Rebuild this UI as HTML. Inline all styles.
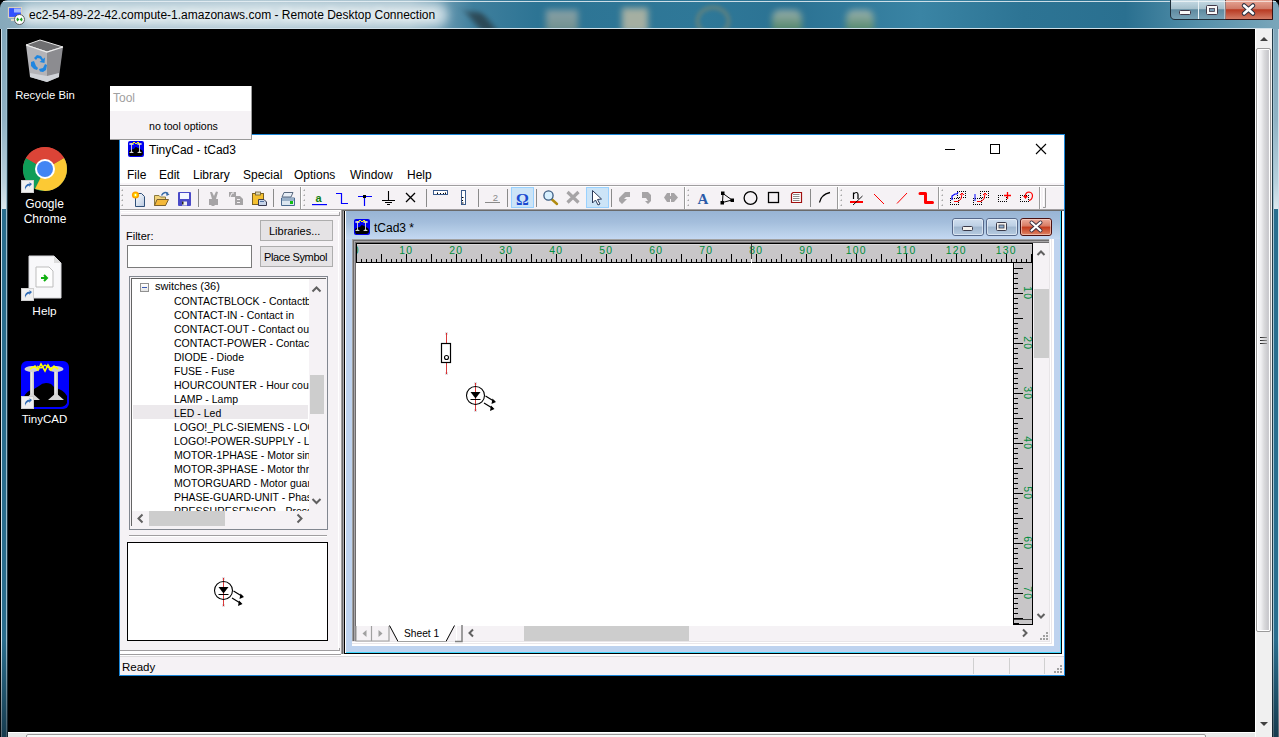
<!DOCTYPE html>
<html><head><meta charset="utf-8">
<style>
*{margin:0;padding:0;box-sizing:border-box}
html,body{width:1279px;height:737px;overflow:hidden;background:#000;font-family:"Liberation Sans",sans-serif;position:relative}
.a{position:absolute}
.t{position:absolute;white-space:nowrap;line-height:1}
</style></head><body>
<!-- OUTER RDP FRAME -->
<div class="a" style="left:0;top:0;width:1279px;height:29px;overflow:hidden;border-radius:8px 8px 0 0;background:linear-gradient(90deg,#86a9bb 0,#9dbac8 8%,#a6c0cd 20%,#98b6c5 32%,#3f7f9d 37%,#2d7494 42%,#2f7898 55%,#2b7293 62%,#3a84a4 72%,#2d7494 80%,#2a7090 88%,#5691ab 94%,#7aa6ba 100%)">
 <div class="a" style="left:18px;top:3px;width:430px;height:24px;background:#e4eef2;opacity:.75;filter:blur(5px);border-radius:12px"></div>
 <div class="a" style="left:474px;top:12px;width:16px;height:20px;background:#202020;opacity:.55;filter:blur(3px);transform:skewX(40deg)"></div>
 <div class="a" style="left:546px;top:10px;width:32px;height:22px;background:linear-gradient(#b0b4b0,#8a9a88);opacity:.7;filter:blur(3px)"></div>
 <div class="a" style="left:622px;top:8px;width:26px;height:24px;background:#d8c8a8;opacity:.7;filter:blur(3px)"></div>
 <div class="a" style="left:696px;top:6px;width:34px;height:30px;border:3px solid #a09060;border-radius:50%;opacity:.55;filter:blur(2px)"></div>
 <div class="a" style="left:772px;top:10px;width:30px;height:22px;background:linear-gradient(#c8c8b8,#5a8a50);opacity:.7;filter:blur(3px);border-radius:8px 8px 0 0"></div>
 <div class="a" style="left:846px;top:10px;width:28px;height:22px;background:linear-gradient(#c8c8b8,#5a8a50);opacity:.7;filter:blur(3px);border-radius:8px 8px 0 0"></div>
</div>
<div class="a" style="left:3px;top:1px;width:1273px;height:1px;background:#e8f0f4;opacity:.85"></div>
<div class="a" style="left:7px;top:28px;width:1265px;height:1px;background:#cfdfe8"></div>
<div class="a" style="left:0;top:29px;width:8px;height:708px;background:linear-gradient(90deg,#000 0,#000 1px,#cfe0ea 1px,#cfe0ea 2px,#2a6e8e 2px,#2a6e8e 6px,#9dbccb 6px,#9dbccb 7px,#1d3542 7px)"></div>
<div class="a" style="left:1272px;top:29px;width:7px;height:708px;background:linear-gradient(90deg,#203a48 0,#203a48 1px,#9fc0d0 1px,#9fc0d0 2px,#2a6e8e 2px,#2a6e8e 6px,#d0e0ea 6px)"></div>
<div class="a" style="left:0;top:640px;width:8px;height:97px;background:linear-gradient(rgba(10,25,35,0),rgba(10,25,35,.6))"></div>
<div class="a" style="left:1272px;top:640px;width:7px;height:97px;background:linear-gradient(rgba(10,25,35,0),rgba(10,25,35,.6))"></div>
<div class="a" style="left:2px;top:29px;width:4px;height:180px;background:linear-gradient(#7fa6ba,#90b2c4 50%,#b8d0dc 85%,#dce8ee)"></div>
<div class="a" style="left:1274px;top:29px;width:4px;height:180px;background:linear-gradient(#7fa6ba,#90b2c4 50%,#b8d0dc 85%,#dce8ee)"></div>
<!-- title text -->
<div class="t" style="left:29px;top:9px;font-size:12px;color:#000;text-shadow:0 0 6px #fff,0 0 10px #fff">ec2-54-89-22-42.compute-1.amazonaws.com - Remote Desktop Connection</div>
<!-- right scrollbar -->
<div class="a" style="left:1255px;top:29px;width:17px;height:708px;background:#f0f0f0;border-left:1px solid #fff"></div>
<div class="a" style="left:1256px;top:48px;width:15px;height:584px;background:linear-gradient(90deg,#fbfbfb,#f0f0f2 30%,#dadadc 55%,#c8c8cc 85%,#d4d4d6);border:1px solid #9a9a9a;border-radius:2px;box-shadow:inset 0 0 0 1px #fff"></div>
<svg class="a" style="left:1255px;top:29px" width="17" height="708"><path d="M5,12 L9,8 L13,12 Z" fill="#404040"/><path d="M5,693 L9,697 L13,693 Z" fill="#404040"/></svg>
<!-- bottom scrollbar -->
<div class="a" style="left:8px;top:732px;width:1247px;height:5px;background:#e8e8e8;border-top:1px solid #fff"></div>
<div class="a" style="left:26px;top:734px;width:1180px;height:6px;background:#fafafa;border:1px solid #9a9a9a;border-radius:2px"></div>
<!-- DESKTOP ICONS -->
<svg class="a" style="left:0;top:0" width="80" height="440" viewBox="0 0 80 440">
 <!-- recycle bin -->
 <polygon points="26,45 40,40 63,47 47,52" fill="#6e6e70" stroke="#e8e8e8" stroke-width="1"/>
 <polygon points="26,45 47,52 47,82 30,77" fill="#b4b4b8"/>
 <polygon points="47,52 63,47 59,77 47,82" fill="#8c8c90"/>
 <polygon points="30,73 47,76 59,73 59,77 47,82 30,77" fill="#d0d3d8"/>
 <polyline points="26,45 47,52 63,47" fill="none" stroke="#eee" stroke-width="1.2"/>
 <g fill="#1f86e0">
  <path d="M34,58 L37,55 L41,56 L43,59 L45,57.5 L44.5,63 L39.5,62 L41.5,60.5 L40,58.5 L37.5,58 L36,60 Z"/>
  <path d="M31,62 L34,61 L36,66 L38,68 L37,70 L34,69 L31,66 Z"/>
  <path d="M39,69 L43,68 L45,64 L47,65 L46,70 L43,72 L40,71.5 Z"/>
 </g>
 <!-- chrome -->
 <circle cx="45" cy="169" r="22" fill="#db4437"/>
 <path d="M45,169 L26,158 A22,22 0 0 0 35,189 Z" fill="#0f9d58"/>
 <path d="M45,169 L35,189 A22,22 0 0 0 45,191 A22,22 0 0 0 67,169 A22,22 0 0 0 64,158 Z" fill="#0f9d58"/>
 <path d="M45,169 L64,158 A22,22 0 0 1 45,191 L35,189 Z" fill="#fcc934"/>
 <path d="M45,169 L26,158 A22,22 0 0 1 64,158 Z" fill="#db4437"/>
 <circle cx="45" cy="169" r="10" fill="#fff"/>
 <circle cx="45" cy="169" r="8" fill="#4285f4"/>
 <!-- help page -->
 <path d="M29,256 L54,256 L61,263 L61,298 L29,298 Z" fill="#f8f8fa" stroke="#d8d8dc" stroke-width="1"/>
 <path d="M54,256 L54,263 L61,263 Z" fill="#dcdcdc"/>
 <path d="M36,267 L49,267 L53,271 L53,287 L36,287 Z" fill="#fefefe" stroke="#bdbdbd" stroke-width="1"/>
 <path d="M41,278 h6 M44,275 l3,3 -3,3" fill="none" stroke="#10b010" stroke-width="2"/>
 <!-- tinycad -->
 <rect x="21" y="361" width="48" height="48" rx="6" fill="#0000ff"/>
 <path d="M23,398 Q27,390 34,389 L39,386 Q44,381 51,384 L55,388 Q63,389 67,396 L67,403 Q65,407 60,407 L28,407 Q23,406 23,402 Z" fill="#000"/>
 <rect x="30" y="371" width="4" height="25" fill="#c8c8c8"/><rect x="31" y="371" width="1.5" height="25" fill="#e8e8e8"/>
 <rect x="54" y="371" width="4" height="25" fill="#c8c8c8"/><rect x="55" y="371" width="1.5" height="25" fill="#e8e8e8"/>
 <path d="M24,400 L32,393 L40,400 Z M48,400 L56,393 L64,400 Z" fill="#d8d8d8"/>
 <ellipse cx="32" cy="369" rx="7.5" ry="3" fill="#d0d0d0"/><ellipse cx="56" cy="369" rx="7.5" ry="3" fill="#d0d0d0"/>
 <path d="M30,369 L35,366 L38,370 L41,364 L45,371 L48,365 L51,370 L54,366 L58,369" fill="none" stroke="#ffff00" stroke-width="1.6"/>
 <path d="M37,366 L41,368 L45,365 L49,368" fill="none" stroke="#ffff00" stroke-width="1.2"/>
 <!-- shortcut overlays -->
 <g>
  <rect x="21.5" y="180.5" width="12" height="12" fill="#f0f0f0" stroke="#d0d0d0"/>
  <path d="M25,190 Q24,184 30,183.5 L29,182 L32,184 L29,187 L29.5,185.5 Q26,186 25,190Z" fill="#2f6bb5"/>
  <rect x="21.5" y="288.5" width="12" height="12" fill="#f0f0f0" stroke="#d0d0d0"/>
  <path d="M25,298 Q24,292 30,291.5 L29,290 L32,292 L29,295 L29.5,293.5 Q26,294 25,298Z" fill="#2f6bb5"/>
  <rect x="21.5" y="396.5" width="12" height="12" fill="#f0f0f0" stroke="#d0d0d0"/>
  <path d="M25,406 Q24,400 30,399.5 L29,398 L32,400 L29,403 L29.5,401.5 Q26,402 25,406Z" fill="#2f6bb5"/>
 </g>
</svg>
<div class="t" style="left:0;width:90px;text-align:center;top:90px;font-size:11.3px;color:#fff">Recycle Bin</div>
<div class="t" style="left:0;width:89px;text-align:center;top:198px;font-size:12px;color:#fff">Google</div>
<div class="t" style="left:0;width:90px;text-align:center;top:213px;font-size:12px;color:#fff">Chrome</div>
<div class="t" style="left:0;width:89px;text-align:center;top:306px;font-size:11.8px;color:#fff">Help</div>
<div class="t" style="left:0;width:89px;text-align:center;top:414px;font-size:11.5px;color:#fff">TinyCAD</div>

<!-- TINYCAD WINDOW -->
<div class="a" style="left:119px;top:134px;width:946px;height:542px;background:#f5f2f5;border:1px solid #1a86d8"></div>
<div class="a" style="left:120px;top:135px;width:944px;height:50px;background:#fff"></div>
<div class="a" style="left:120px;top:183px;width:944px;height:2px;background:#f8f5f8"></div>
<div class="a" style="left:120px;top:185px;width:944px;height:1px;background:#a09ea0"></div>
<div class="a" style="left:120px;top:186px;width:944px;height:1px;background:#fff"></div>
<div class="a" style="left:120px;top:209px;width:944px;height:1px;background:#a09ea0"></div>
<div class="a" style="left:120px;top:210px;width:944px;height:1px;background:#fff"></div>
<div class="t" style="left:149px;top:144px;font-size:12px;color:#000">TinyCad - tCad3</div>
<svg class="a" style="left:930px;top:134px" width="134" height="30">
 <path d="M15,15.5 H25" stroke="#000" stroke-width="1"/>
 <rect x="60.5" y="10.5" width="9" height="9" fill="none" stroke="#000" stroke-width="1"/>
 <path d="M106,10 L116,20 M116,10 L106,20" stroke="#000" stroke-width="1.1"/>
</svg>
<div class="t" style="left:127px;top:169px;font-size:12px;color:#000;word-spacing:0">File</div>
<div class="t" style="left:159px;top:169px;font-size:12px;color:#000">Edit</div>
<div class="t" style="left:193px;top:169px;font-size:12px;color:#000">Library</div>
<div class="t" style="left:243px;top:169px;font-size:12px;color:#000">Special</div>
<div class="t" style="left:294px;top:169px;font-size:12px;color:#000">Options</div>
<div class="t" style="left:350px;top:169px;font-size:12px;color:#000">Window</div>
<div class="t" style="left:407px;top:169px;font-size:12px;color:#000">Help</div>
<!-- status bar -->
<div class="a" style="left:120px;top:650px;width:220px;height:1px;background:#a09ea0"></div>
<div class="a" style="left:120px;top:651px;width:220px;height:3px;background:#fff"></div>
<div class="a" style="left:120px;top:654px;width:222px;height:1px;background:#a09ea0"></div>
<div class="a" style="left:120px;top:655px;width:944px;height:1px;background:#fff"></div>
<div class="t" style="left:122px;top:662px;font-size:11.5px;color:#000">Ready</div>

<!-- LEFT PANEL -->
<div class="a" style="left:121px;top:212px;width:218px;height:1px;background:#fff"></div>
<div class="a" style="left:121px;top:215px;width:218px;height:1px;background:#a09ea0"></div>
<div class="a" style="left:339px;top:212px;width:1px;height:4px;background:#a09ea0"></div>
<div class="a" style="left:338px;top:220px;width:1px;height:430px;background:#fff"></div>
<div class="a" style="left:339px;top:648px;width:1px;height:3px;background:#a09ea0"></div>
<div class="t" style="left:126px;top:231px;font-size:11px;color:#000">Filter:</div>
<div class="a" style="left:127px;top:245px;width:125px;height:23px;background:#fff;border:1px solid #7a7a7a"></div>
<div class="a" style="left:260px;top:220px;width:73px;height:21px;background:#e5e3e5;border:1px solid #adadad"></div>
<div class="t" style="left:269px;top:226px;font-size:11px;color:#000">Libraries...</div>
<div class="a" style="left:260px;top:246px;width:73px;height:21px;background:#e5e3e5;border:1px solid #adadad"></div>
<div class="t" style="left:264px;top:252px;font-size:11px;color:#000;letter-spacing:-0.35px">Place Symbol</div>
<!-- tree -->
<div class="a" style="left:129px;top:276px;width:199px;height:254px;background:#f5f2f5;border:1px solid #828790"></div>
<div class="a" style="left:131px;top:278px;width:1px;height:248px;background:#646464"></div>
<div class="a" style="left:131px;top:278px;width:195px;height:1px;background:#646464"></div>
<div class="a" style="left:132px;top:279px;width:177px;height:232px;background:#fff;overflow:hidden">
 <div class="a" style="left:1px;top:126px;width:175px;height:14px;background:#ece9ec"></div>
 <div class="a" style="left:8px;top:4px;width:9px;height:9px;border:1px solid #919191;background:linear-gradient(#fff,#e4e4e4)"></div>
 <div class="a" style="left:10px;top:8px;width:5px;height:1px;background:#3b5bb5"></div>
 <div id="tree" style="position:absolute;left:0;top:1px;font-size:10.5px;color:#000;line-height:14px">
  <div class="t" style="left:23px;top:1px;font-size:11px">switches (36)</div>
  <div class="t" style="left:42px;top:16px">CONTACTBLOCK - Contactblock</div>
  <div class="t" style="left:42px;top:30px">CONTACT-IN - Contact in</div>
  <div class="t" style="left:42px;top:44px">CONTACT-OUT - Contact out</div>
  <div class="t" style="left:42px;top:58px">CONTACT-POWER - Contact power</div>
  <div class="t" style="left:42px;top:72px">DIODE - Diode</div>
  <div class="t" style="left:42px;top:86px">FUSE - Fuse</div>
  <div class="t" style="left:42px;top:100px">HOURCOUNTER - Hour counter</div>
  <div class="t" style="left:42px;top:114px">LAMP - Lamp</div>
  <div class="t" style="left:42px;top:128px">LED - Led</div>
  <div class="t" style="left:42px;top:142px">LOGO!_PLC-SIEMENS - LOGO</div>
  <div class="t" style="left:42px;top:156px">LOGO!-POWER-SUPPLY - LOGO</div>
  <div class="t" style="left:42px;top:170px">MOTOR-1PHASE - Motor single</div>
  <div class="t" style="left:42px;top:184px">MOTOR-3PHASE - Motor three</div>
  <div class="t" style="left:42px;top:198px">MOTORGUARD - Motor guard</div>
  <div class="t" style="left:42px;top:212px">PHASE-GUARD-UNIT - Phase</div>
  <div class="t" style="left:42px;top:226px">PRESSURESENSOR - Pressure</div>
 </div>
</div>
<div class="a" style="left:310px;top:375px;width:14px;height:39px;background:#cdcdcd"></div>
<div class="a" style="left:149px;top:511px;width:76px;height:15px;background:#cdcdcd"></div>
<svg class="a" style="left:129px;top:276px" width="200" height="255">
 <path d="M183.5,15.5 L187.5,11.5 L191.5,15.5" fill="none" stroke="#606060" stroke-width="2"/>
 <path d="M183.5,223 L187.5,227 L191.5,223" fill="none" stroke="#606060" stroke-width="2"/>
 <path d="M13.5,238.5 L9.5,242.5 L13.5,246.5" fill="none" stroke="#606060" stroke-width="2"/>
 <path d="M168.5,238.5 L172.5,242.5 L168.5,246.5" fill="none" stroke="#606060" stroke-width="2"/>
</svg>
<div class="a" style="left:129px;top:535px;width:198px;height:1px;background:#a09ea0"></div>
<div class="a" style="left:129px;top:536px;width:198px;height:1px;background:#fff"></div>
<!-- preview -->
<div class="a" style="left:127px;top:542px;width:201px;height:99px;background:#fff;border:1px solid #000"></div>
<!-- TOOL POPUP -->
<div class="a" style="left:110px;top:86px;width:142px;height:54px;background:#f5f2f5;border-right:1px solid #9a9a9a;border-bottom:1px solid #9a9a9a"></div>
<div class="a" style="left:110px;top:86px;width:141px;height:25px;background:#fff"></div>
<div class="t" style="left:113px;top:92px;font-size:12px;color:#a0a0a0">Tool</div>
<div class="t" style="left:149px;top:121px;font-size:10.6px;color:#000">no tool options</div>

<!-- MDI CLIENT + CHILD -->
<div class="a" style="left:341px;top:210px;width:723px;height:1px;background:#6a6a6a"></div>
<div class="a" style="left:341px;top:210px;width:1px;height:444px;background:#a0a0a0"></div>
<div class="a" style="left:342px;top:211px;width:1px;height:443px;background:#6d6b6d"></div>
<div class="a" style="left:343px;top:211px;width:1px;height:443px;background:#a8a6a8"></div>
<div class="a" style="left:344px;top:211px;width:718px;height:443px;background:#000"></div>
<div class="a" style="left:345px;top:211px;width:1px;height:442px;background:#fff"></div>
<div class="a" style="left:346px;top:211px;width:715px;height:442px;background:#40d8ff"></div>
<div class="a" style="left:346px;top:211px;width:714px;height:441px;background:#bed3ef"></div>
<div class="a" style="left:1062px;top:211px;width:2px;height:444px;background:#fff"></div>
<div class="a" style="left:346px;top:211px;width:714px;height:28px;background:linear-gradient(#98b4d4,#a4bedc 40%,#b4cce6 70%,#c4d8f2)"></div>
<!-- child client sunken edge -->
<div class="a" style="left:352px;top:239px;width:702px;height:407px;background:#fff"></div>
<div class="a" style="left:352px;top:239px;width:700px;height:405px;background:#eae7ea"></div>
<div class="a" style="left:352px;top:239px;width:699px;height:404px;background:#fff"></div>
<div class="a" style="left:352px;top:239px;width:698px;height:403px;background:#e8e5e8"></div>
<div class="a" style="left:352px;top:239px;width:697px;height:402px;background:#a0a0a0"></div>
<div class="a" style="left:353px;top:240px;width:696px;height:401px;background:#6d6b6d"></div>
<div class="a" style="left:354px;top:241px;width:695px;height:400px;background:#a8a6a8"></div>
<div class="a" style="left:355px;top:242px;width:694px;height:399px;background:#6d6b6d"></div>
<div class="a" style="left:356px;top:243px;width:693px;height:398px;background:#f5f2f5"></div>
<!-- canvas -->
<div class="a" style="left:356px;top:263px;width:657px;height:363px;background:#fff"></div>
<svg class="a" style="left:0;top:0" width="1279" height="737" viewBox="0 0 1279 737" shape-rendering="crispEdges">
<defs><clipPath id="hr"><rect x="357" y="244" width="675" height="18"/></clipPath><clipPath id="vr"><rect x="1014" y="263" width="18" height="361"/></clipPath></defs>
<rect x="356" y="243" width="677" height="20" fill="#000"/>
<rect x="357" y="244" width="675" height="18" fill="#c8c6c8"/>
<rect x="357" y="244" width="675" height="1" fill="#dcdadc"/>
<path d="M361.5,259V262 M366.5,259V262 M371.5,259V262 M376.5,259V262 M381.5,254V262 M386.5,259V262 M391.5,259V262 M396.5,259V262 M401.5,259V262 M406.5,254V262 M411.5,259V262 M416.5,259V262 M421.5,259V262 M426.5,259V262 M431.5,254V262 M436.5,259V262 M441.5,259V262 M446.5,259V262 M451.5,259V262 M456.5,254V262 M461.5,259V262 M466.5,259V262 M471.5,259V262 M476.5,259V262 M481.5,254V262 M486.5,259V262 M491.5,259V262 M496.5,259V262 M501.5,259V262 M506.5,254V262 M511.5,259V262 M516.5,259V262 M521.5,259V262 M526.5,259V262 M531.5,254V262 M536.5,259V262 M541.5,259V262 M546.5,259V262 M551.5,259V262 M556.5,254V262 M561.5,259V262 M566.5,259V262 M571.5,259V262 M576.5,259V262 M581.5,254V262 M586.5,259V262 M591.5,259V262 M596.5,259V262 M601.5,259V262 M606.5,254V262 M611.5,259V262 M616.5,259V262 M621.5,259V262 M626.5,259V262 M631.5,254V262 M636.5,259V262 M641.5,259V262 M646.5,259V262 M651.5,259V262 M656.5,254V262 M661.5,259V262 M666.5,259V262 M671.5,259V262 M676.5,259V262 M681.5,254V262 M686.5,259V262 M691.5,259V262 M696.5,259V262 M701.5,259V262 M706.5,254V262 M711.5,259V262 M716.5,259V262 M721.5,259V262 M726.5,259V262 M731.5,254V262 M736.5,259V262 M741.5,259V262 M746.5,259V262 M751.5,259V262 M756.5,254V262 M761.5,259V262 M766.5,259V262 M771.5,259V262 M776.5,259V262 M781.5,254V262 M786.5,259V262 M791.5,259V262 M796.5,259V262 M801.5,259V262 M806.5,254V262 M811.5,259V262 M816.5,259V262 M821.5,259V262 M826.5,259V262 M831.5,254V262 M836.5,259V262 M841.5,259V262 M846.5,259V262 M851.5,259V262 M856.5,254V262 M861.5,259V262 M866.5,259V262 M871.5,259V262 M876.5,259V262 M881.5,254V262 M886.5,259V262 M891.5,259V262 M896.5,259V262 M901.5,259V262 M906.5,254V262 M911.5,259V262 M916.5,259V262 M921.5,259V262 M926.5,259V262 M931.5,254V262 M936.5,259V262 M941.5,259V262 M946.5,259V262 M951.5,259V262 M956.5,254V262 M961.5,259V262 M966.5,259V262 M971.5,259V262 M976.5,259V262 M981.5,254V262 M986.5,259V262 M991.5,259V262 M996.5,259V262 M1001.5,259V262 M1006.5,254V262 M1011.5,259V262 M1016.5,259V262 M1021.5,259V262 M1026.5,259V262 M1031.5,254V262" stroke="#000" stroke-width="1" fill="none"/>
<g clip-path="url(#hr)" font-family="Liberation Sans" font-size="10.4" letter-spacing="1.2" fill="#008c3c" text-anchor="middle" shape-rendering="auto"><text x="356.3" y="254">0</text><text x="406.3" y="254">10</text><text x="456.3" y="254">20</text><text x="506.3" y="254">30</text><text x="556.3" y="254">40</text><text x="606.3" y="254">50</text><text x="656.3" y="254">60</text><text x="706.3" y="254">70</text><text x="756.3" y="254">80</text><text x="806.3" y="254">90</text><text x="856.3" y="254">100</text><text x="906.3" y="254">110</text><text x="956.3" y="254">120</text><text x="1006.3" y="254">130</text></g>
<rect x="1013" y="262" width="20" height="363" fill="#000"/>
<rect x="1014" y="263" width="18" height="361" fill="#c8c6c8"/>
<rect x="1014" y="263" width="1" height="355" fill="#dcdadc"/>
<path d="M1014,268.5H1023 M1014,273.5H1018 M1014,278.5H1018 M1014,283.5H1018 M1014,288.5H1018 M1014,293.5H1023 M1014,298.5H1018 M1014,303.5H1018 M1014,308.5H1018 M1014,313.5H1018 M1014,318.5H1023 M1014,323.5H1018 M1014,328.5H1018 M1014,333.5H1018 M1014,338.5H1018 M1014,343.5H1023 M1014,348.5H1018 M1014,353.5H1018 M1014,358.5H1018 M1014,363.5H1018 M1014,368.5H1023 M1014,373.5H1018 M1014,378.5H1018 M1014,383.5H1018 M1014,388.5H1018 M1014,393.5H1023 M1014,398.5H1018 M1014,403.5H1018 M1014,408.5H1018 M1014,413.5H1018 M1014,418.5H1023 M1014,423.5H1018 M1014,428.5H1018 M1014,433.5H1018 M1014,438.5H1018 M1014,443.5H1023 M1014,448.5H1018 M1014,453.5H1018 M1014,458.5H1018 M1014,463.5H1018 M1014,468.5H1023 M1014,473.5H1018 M1014,478.5H1018 M1014,483.5H1018 M1014,488.5H1018 M1014,493.5H1023 M1014,498.5H1018 M1014,503.5H1018 M1014,508.5H1018 M1014,513.5H1018 M1014,518.5H1023 M1014,523.5H1018 M1014,528.5H1018 M1014,533.5H1018 M1014,538.5H1018 M1014,543.5H1023 M1014,548.5H1018 M1014,553.5H1018 M1014,558.5H1018 M1014,563.5H1018 M1014,568.5H1023 M1014,573.5H1018 M1014,578.5H1018 M1014,583.5H1018 M1014,588.5H1018 M1014,593.5H1023 M1014,598.5H1018 M1014,603.5H1018 M1014,608.5H1018 M1014,613.5H1018 M1014,618.5H1023" stroke="#000" stroke-width="1" fill="none"/>
<rect x="1014" y="619" width="18" height="1" fill="#404040"/>
<rect x="1014" y="623" width="5" height="1" fill="#000"/>
<g clip-path="url(#vr)" font-family="Liberation Sans" font-size="10.4" letter-spacing="1.2" fill="#008c3c" text-anchor="middle" shape-rendering="auto"><text transform="translate(1023.5,293.3) rotate(90)" x="0" y="0">10</text><text transform="translate(1023.5,343.3) rotate(90)" x="0" y="0">20</text><text transform="translate(1023.5,393.3) rotate(90)" x="0" y="0">30</text><text transform="translate(1023.5,443.3) rotate(90)" x="0" y="0">40</text><text transform="translate(1023.5,493.3) rotate(90)" x="0" y="0">50</text><text transform="translate(1023.5,543.3) rotate(90)" x="0" y="0">60</text><text transform="translate(1023.5,593.3) rotate(90)" x="0" y="0">70</text></g>
</svg>
<!-- child caption -->
<div class="t" style="left:374px;top:222px;font-size:12px;color:#000">tCad3 *</div>

<!-- child scrollbars -->
<div class="a" style="left:1034px;top:289px;width:15px;height:69px;background:#cdcdcd"></div>
<div class="a" style="left:524px;top:626px;width:165px;height:15px;background:#cdcdcd"></div>
<svg class="a" style="left:340px;top:240px" width="720" height="410">
 <path d="M697.5,15 L701,11.5 L704.5,15" fill="none" stroke="#606060" stroke-width="2"/>
 <path d="M697.5,374 L701,377.5 L704.5,374" fill="none" stroke="#606060" stroke-width="2"/>
 <path d="M133,389.5 L129.5,393 L133,396.5" fill="none" stroke="#606060" stroke-width="2"/>
 <path d="M683,389.5 L686.5,393 L683,396.5" fill="none" stroke="#606060" stroke-width="2"/>
 <g fill="#a0a0a0"><rect x="706" y="392" width="2" height="2"/><rect x="703" y="395" width="2" height="2"/><rect x="706" y="395" width="2" height="2"/><rect x="700" y="398" width="2" height="2"/><rect x="703" y="398" width="2" height="2"/><rect x="706" y="398" width="2" height="2"/></g>
 <!-- sheet tabs -->
 <path d="M16,386 V401 H49 V386" fill="none" stroke="#a0a0a0" stroke-width="1.2"/>
 <path d="M31.5,386 V401" stroke="#a0a0a0" stroke-width="1.2"/>
 <path d="M26.5,390 L22.5,393.5 L26.5,397 Z" fill="#a0a0a0"/>
 <path d="M38.5,390 L42.5,393.5 L38.5,397 Z" fill="#a0a0a0"/>
 <path d="M49.5,385.5 L58,401.5 H106 L114.5,385.5 Z" fill="#fff" stroke="none"/>
 <path d="M49.5,385.5 L58,401.5 H106 L114.5,385.5" fill="none" stroke="#000" stroke-width="1"/>
 <path d="M58,401.5 H106" stroke="#a0a0a0" stroke-width="1"/>
 <path d="M116.5,386 V401" stroke="#fff" stroke-width="1"/>
 <path d="M122,385 V401.5 H115" fill="none" stroke="#808080" stroke-width="1.5"/>
</svg>
<div class="t" style="left:404px;top:629px;font-size:10.2px;color:#000">Sheet 1</div>
<!-- status bar seps -->
<div class="a" style="left:973px;top:658px;width:1px;height:16px;background:#d0d0d0"></div>
<div class="a" style="left:1009px;top:658px;width:1px;height:16px;background:#d0d0d0"></div>
<div class="a" style="left:1044px;top:658px;width:1px;height:16px;background:#d0d0d0"></div>
<svg class="a" style="left:1052px;top:663px" width="14" height="14"><g fill="#a0a0a0"><rect x="8" y="2" width="2" height="2"/><rect x="5" y="5" width="2" height="2"/><rect x="8" y="5" width="2" height="2"/><rect x="2" y="8" width="2" height="2"/><rect x="5" y="8" width="2" height="2"/><rect x="8" y="8" width="2" height="2"/></g></svg>

<!-- SCHEMATIC -->
<svg class="a" style="left:0;top:0" width="1279" height="737" viewBox="0 0 1279 737">
 <rect x="445" y="332" width="3" height="3" fill="#e4e0e4"/><rect x="445" y="372" width="3" height="3" fill="#e4e0e4"/>
 <path d="M446.5,333 V343 M446.5,363 V373.5" stroke="#d83a3a" stroke-width="1"/>
 <rect x="446" y="333" width="1" height="1" fill="#e02020"/><rect x="446" y="373" width="1" height="1" fill="#e02020"/>
 <rect x="441.5" y="343.5" width="9" height="19" fill="none" stroke="#000" stroke-width="1.2"/>
 <circle cx="446.5" cy="357.5" r="2" fill="none" stroke="#000" stroke-width="1.1"/>
 <g transform="translate(475.5,395.5)">
 <rect x="-1.5" y="-13.5" width="3" height="3" fill="#e4e0e4"/><rect x="-1.5" y="13.5" width="3" height="3" fill="#e4e0e4"/>
 <path d="M0,-12 V15" stroke="#d83a3a" stroke-width="1"/>
 <circle cx="0" cy="0" r="9" fill="none" stroke="#000" stroke-width="1.1"/>
 <path d="M-5,-3.5 H5 L0,3 Z" fill="#000"/>
 <path d="M-5,4 H5" stroke="#000" stroke-width="1"/>
 <rect x="-0.5" y="-12.5" width="1" height="1" fill="#e02020"/><rect x="-0.5" y="14.5" width="1" height="1" fill="#e02020"/>
 <path d="M10,0.5 L19,6 M8.5,7.5 L17.5,13" stroke="#000" stroke-width="1.2"/>
 <path d="M20.5,6.5 L16,8.5 L17,3 Z M19,13.5 L14.5,15.5 L15.5,10 Z" fill="#000"/>
</g>
 <g transform="translate(223.5,590.5)">
 <rect x="-1.5" y="-13.5" width="3" height="3" fill="#e4e0e4"/><rect x="-1.5" y="13.5" width="3" height="3" fill="#e4e0e4"/>
 <path d="M0,-12 V15" stroke="#d83a3a" stroke-width="1"/>
 <circle cx="0" cy="0" r="9" fill="none" stroke="#000" stroke-width="1.1"/>
 <path d="M-5,-3.5 H5 L0,3 Z" fill="#000"/>
 <path d="M-5,4 H5" stroke="#000" stroke-width="1"/>
 <rect x="-0.5" y="-12.5" width="1" height="1" fill="#e02020"/><rect x="-0.5" y="14.5" width="1" height="1" fill="#e02020"/>
 <path d="M10,0.5 L19,6 M8.5,7.5 L17.5,13" stroke="#000" stroke-width="1.2"/>
 <path d="M20.5,6.5 L16,8.5 L17,3 Z M19,13.5 L14.5,15.5 L15.5,10 Z" fill="#000"/>
</g>
</svg>
<!-- WINDOW ICONS -->
<svg class="a" style="left:128px;top:141px" width="16" height="16" viewBox="0 0 16 16">
 <rect x="0" y="0" width="16" height="16" rx="2" fill="#0000f0"/>
 <path d="M1,10 Q3,8 6,8 Q7,6 8,6 Q10,7 12,8 Q15,9 15,12 Q15,15 12,15 H2 Q1,14 1,12 Z" fill="#000"/>
 <rect x="3" y="3" width="1" height="9" fill="#c8c8c8"/><rect x="11" y="3" width="1" height="9" fill="#c8c8c8"/>
 <path d="M1,12 L3.5,10 L6,12 Z M9,12 L11.5,10 L14,12 Z" fill="#d8d8d8"/>
 <ellipse cx="3.5" cy="3" rx="2.5" ry="1" fill="#d8d8d8"/><ellipse cx="11.5" cy="3" rx="2.5" ry="1" fill="#d8d8d8"/>
 <path d="M4,3 L6,1 L8,3 L10,1 L12,3" fill="none" stroke="#ffff00" stroke-width="1"/>
</svg>
<svg class="a" style="left:354px;top:219px" width="16" height="16" viewBox="0 0 16 16">
 <rect x="0" y="0" width="16" height="16" rx="2" fill="#0000f0"/>
 <path d="M1,10 Q3,8 6,8 Q7,6 8,6 Q10,7 12,8 Q15,9 15,12 Q15,15 12,15 H2 Q1,14 1,12 Z" fill="#000"/>
 <rect x="3" y="3" width="1" height="9" fill="#c8c8c8"/><rect x="11" y="3" width="1" height="9" fill="#c8c8c8"/>
 <path d="M1,12 L3.5,10 L6,12 Z M9,12 L11.5,10 L14,12 Z" fill="#d8d8d8"/>
 <ellipse cx="3.5" cy="3" rx="2.5" ry="1" fill="#d8d8d8"/><ellipse cx="11.5" cy="3" rx="2.5" ry="1" fill="#d8d8d8"/>
 <path d="M4,3 L6,1 L8,3 L10,1 L12,3" fill="none" stroke="#ffff00" stroke-width="1"/>
</svg>
<!-- CHILD CAPTION BUTTONS -->
<svg class="a" style="left:950px;top:216px" width="104" height="22" viewBox="0 0 104 22">
 <defs>
  <linearGradient id="cb" x1="0" y1="0" x2="0" y2="1"><stop offset="0" stop-color="#d2e0f0"/><stop offset="0.45" stop-color="#bccfe4"/><stop offset="0.5" stop-color="#9fb6ce"/><stop offset="1" stop-color="#b8cce2"/></linearGradient>
  <linearGradient id="cr" x1="0" y1="0" x2="0" y2="1"><stop offset="0" stop-color="#eeb0a0"/><stop offset="0.45" stop-color="#d87a62"/><stop offset="0.5" stop-color="#c33a1c"/><stop offset="1" stop-color="#e08a6a"/></linearGradient>
 </defs>
 <rect x="2.5" y="2.5" width="31" height="17" rx="2.5" fill="url(#cb)" stroke="#56688a" stroke-width="1"/>
 <rect x="3.5" y="3.5" width="29" height="15" rx="1.5" fill="none" stroke="#eef4fb" stroke-width="0.8" opacity=".8"/>
 <rect x="12.5" y="10.5" width="10" height="4" rx="1" fill="#f4f2ee" stroke="#3a3a4a" stroke-width="1"/>
 <rect x="36.5" y="2.5" width="31" height="17" rx="2.5" fill="url(#cb)" stroke="#56688a" stroke-width="1"/>
 <rect x="37.5" y="3.5" width="29" height="15" rx="1.5" fill="none" stroke="#eef4fb" stroke-width="0.8" opacity=".8"/>
 <rect x="46.5" y="6.5" width="10" height="8" rx="1" fill="#f4f2ee" stroke="#3a3a4a" stroke-width="1"/>
 <rect x="49" y="9" width="5" height="3" fill="#8fb0d0" stroke="#3a3a4a" stroke-width="0.8"/>
 <rect x="70.5" y="2.5" width="31" height="17" rx="2.5" fill="url(#cr)" stroke="#4a1010" stroke-width="1"/>
 <rect x="71.5" y="3.5" width="29" height="15" rx="1.5" fill="none" stroke="#fbe0d8" stroke-width="0.8" opacity=".7"/>
 <path d="M81.5,6.5 L90.5,14.5 M90.5,6.5 L81.5,14.5" stroke="#3a3040" stroke-width="4" stroke-linecap="round"/>
 <path d="M81.5,6.5 L90.5,14.5 M90.5,6.5 L81.5,14.5" stroke="#fff" stroke-width="2.2" stroke-linecap="round"/>
</svg>
<!-- OUTER CAPTION BUTTONS -->
<svg class="a" style="left:1168px;top:0" width="106" height="22" viewBox="0 0 106 22">
 <defs>
  <linearGradient id="ob" x1="0" y1="0" x2="0" y2="1"><stop offset="0" stop-color="#c8dce6"/><stop offset="0.45" stop-color="#a6c0cc"/><stop offset="0.5" stop-color="#5f8aa0"/><stop offset="1" stop-color="#7aa4b8"/></linearGradient>
  <linearGradient id="or" x1="0" y1="0" x2="0" y2="1"><stop offset="0" stop-color="#e8a898"/><stop offset="0.45" stop-color="#cf7a68"/><stop offset="0.5" stop-color="#b83a22"/><stop offset="1" stop-color="#d4806a"/></linearGradient>
 </defs>
 <path d="M2.5,0 V15 Q2.5,19.5 7,19.5 H104.5 V0" fill="url(#ob)" stroke="#1e2e3a" stroke-width="1"/>
 <path d="M57.5,0 V19.5 H104.5 V0" fill="url(#or)" stroke="#3a1010" stroke-width="1"/>
 <path d="M30.5,0.5 V19" stroke="#e8f0f4" stroke-width="1"/>
 <path d="M57,0.5 V19" stroke="#f0e8e8" stroke-width="1"/>
 <rect x="3.5" y="1" width="101" height="1" fill="#fff" opacity=".6"/>
 <rect x="11.5" y="10.5" width="11" height="4" rx="1" fill="#f8f8f8" stroke="#403848" stroke-width="1"/>
 <rect x="38.5" y="5.5" width="11" height="9" rx="1" fill="#f8f8f8" stroke="#403848" stroke-width="1"/>
 <rect x="41.5" y="8.5" width="5" height="3" fill="#7aa0b8" stroke="#403848" stroke-width="0.8"/>
 <path d="M76,5.5 L85,13.5 M85,5.5 L76,13.5" stroke="#2a3040" stroke-width="4.5" stroke-linecap="round"/>
 <path d="M76,5.5 L85,13.5 M85,5.5 L76,13.5" stroke="#fff" stroke-width="2.5" stroke-linecap="round"/>
</svg>
<!-- RDP ICON -->
<svg class="a" style="left:7px;top:6px" width="20" height="20" viewBox="0 0 20 20">
 <rect x="1.5" y="1.5" width="13" height="10" fill="#3050ff" stroke="#d8d0c0" stroke-width="1.2"/>
 <rect x="7" y="2.5" width="7" height="4" fill="#a0b8ff"/>
 <rect x="4" y="13" width="7" height="2" fill="#e0d8c8"/>
 <circle cx="12.5" cy="13.5" r="5" fill="#fff" stroke="#606060" stroke-width="1"/>
 <path d="M9.5,13.5 H11.5 M13.5,13.5 H15.5 M10,12 L11.5,13.5 L10,15 M15,12 L13.5,13.5 L15,15" stroke="#20a020" stroke-width="1.2" fill="none"/>
</svg>

<!-- TOOLBAR -->
<svg class="a" style="left:0;top:0" width="1279" height="737" viewBox="0 0 1279 737">
<path d="M123,189 L123,191 L121,191 Z" fill="#a8a8a8"/><path d="M123,194 L123,196 L121,196 Z" fill="#a8a8a8"/><path d="M123,199 L123,201 L121,201 Z" fill="#a8a8a8"/><path d="M123,204 L123,206 L121,206 Z" fill="#a8a8a8"/>
<path d="M305,189 L305,191 L303,191 Z" fill="#a8a8a8"/><path d="M305,194 L305,196 L303,196 Z" fill="#a8a8a8"/><path d="M305,199 L305,201 L303,201 Z" fill="#a8a8a8"/><path d="M305,204 L305,206 L303,206 Z" fill="#a8a8a8"/>
<path d="M689,189 L689,191 L687,191 Z" fill="#a8a8a8"/><path d="M689,194 L689,196 L687,196 Z" fill="#a8a8a8"/><path d="M689,199 L689,201 L687,201 Z" fill="#a8a8a8"/><path d="M689,204 L689,206 L687,206 Z" fill="#a8a8a8"/>
<path d="M842,189 L842,191 L840,191 Z" fill="#a8a8a8"/><path d="M842,194 L842,196 L840,196 Z" fill="#a8a8a8"/><path d="M842,199 L842,201 L840,201 Z" fill="#a8a8a8"/><path d="M842,204 L842,206 L840,206 Z" fill="#a8a8a8"/>
<path d="M943,189 L943,191 L941,191 Z" fill="#a8a8a8"/><path d="M943,194 L943,196 L941,196 Z" fill="#a8a8a8"/><path d="M943,199 L943,201 L941,201 Z" fill="#a8a8a8"/><path d="M943,204 L943,206 L941,206 Z" fill="#a8a8a8"/>
<rect x="198" y="189" width="1" height="18" fill="#8a8a8a"/>
<rect x="273" y="189" width="1" height="18" fill="#8a8a8a"/>
<rect x="426" y="189" width="1" height="18" fill="#8a8a8a"/>
<rect x="478" y="189" width="1" height="18" fill="#8a8a8a"/>
<rect x="507" y="189" width="1" height="18" fill="#8a8a8a"/>
<rect x="536" y="189" width="1" height="18" fill="#8a8a8a"/>
<rect x="611" y="189" width="1" height="18" fill="#8a8a8a"/>
<rect x="810" y="189" width="1" height="18" fill="#8a8a8a"/>
<rect x="300" y="187" width="1" height="22" fill="#9a9a9a"/><rect x="301" y="187" width="1" height="22" fill="#fff"/>
<rect x="684" y="187" width="1" height="22" fill="#9a9a9a"/><rect x="685" y="187" width="1" height="22" fill="#fff"/>
<rect x="837" y="187" width="1" height="22" fill="#9a9a9a"/><rect x="838" y="187" width="1" height="22" fill="#fff"/>
<rect x="938" y="187" width="1" height="22" fill="#9a9a9a"/><rect x="939" y="187" width="1" height="22" fill="#fff"/>
<rect x="1039" y="187" width="1" height="22" fill="#9a9a9a"/><rect x="1040" y="187" width="1" height="22" fill="#fff"/>
<path d="M1045.5,188 V207.5 H1043" fill="none" stroke="#9a9a9a" stroke-width="1"/><path d="M1043.5,188 V206" stroke="#fff" stroke-width="1"/>
<rect x="511.5" y="187.5" width="22" height="20" fill="#cce4f7" stroke="#99d1ff" stroke-width="1"/>
<rect x="586.5" y="187.5" width="22" height="20" fill="#cce4f7" stroke="#99d1ff" stroke-width="1"/>
<path d="M135.5,193.5 H141.5 L144.5,196.5 V206.5 H135.5 Z" fill="url(#pg)" stroke="#30507a" stroke-width="1"/>
<circle cx="135.5" cy="195" r="3.6" fill="#ffa000"/><circle cx="135.5" cy="195" r="2" fill="#ffe600"/><circle cx="135.5" cy="195" r="0.9" fill="#fff"/>
<path d="M154.5,195.5 H159 L160.5,197 H165.5 V205.5 H154.5 Z" fill="#f2d37a" stroke="#8a7a40" stroke-width="1"/>
<path d="M157,199.5 H168.5 L165.5,205.5 H154.5 Z" fill="#f4b83a" stroke="#7a6030" stroke-width="1"/>
<path d="M161.5,195.5 Q164,191 168,193.5" fill="none" stroke="#3a6ca8" stroke-width="1.5"/><path d="M166,192 L169.5,194.5 L166.5,196 Z" fill="#3a6ca8"/>
<rect x="178" y="192" width="13" height="14" rx="1" fill="#4a4ac8"/><rect x="180" y="193" width="9" height="6" fill="#f4f6ff"/><rect x="182" y="201.5" width="5" height="4" fill="#f0f0f0"/><rect x="182" y="201.5" width="1.5" height="3" fill="#222"/>
<path d="M210,192 L212,192 L214,196 L216,191.5 L218,192 L216,199 L218,199 L218,205 L215,205 L214,206 L212,206 L211,205 L209,205 L209,199 L212,199 Z" fill="#a6a4a6"/>
<path d="M229,192 H236 V197 H229 Z" fill="#a6a4a6"/><path d="M235,196 H240 L243,199 V205 H235 Z" fill="#a6a4a6"/><rect x="237" y="199" width="3" height="1" fill="#f5f2f5"/><rect x="237" y="202" width="3" height="1" fill="#f5f2f5"/><path d="M230,197 L232,193 H234" stroke="#f5f2f5" stroke-width="1" fill="none"/>
<rect x="252.5" y="193.5" width="11" height="11" fill="#f4c030" stroke="#7a6020" stroke-width="1"/><rect x="255.5" y="192" width="5" height="3" fill="#e0d8b0" stroke="#6a5a30" stroke-width="0.8"/>
<path d="M258.5,199.5 H264 L266.5,202 V205.5 H258.5 Z" fill="#c8d4e8" stroke="#3a3a50" stroke-width="1"/><rect x="260" y="201" width="4" height="1" fill="#5070a0"/>
<path d="M284,192.5 H293 L291,197 H282 Z" fill="#e8eef6" stroke="#5a6a80" stroke-width="1"/>
<path d="M281.5,198 H294.5 V205.5 H281.5 Z" fill="#dce6f0" stroke="#4a6a90" stroke-width="1"/><rect x="282" y="198" width="12" height="3" fill="#9ab0c8"/><rect x="290" y="201" width="3" height="3" fill="#10c010"/>
<text x="318.5" y="201.5" font-family="Liberation Sans" font-size="11" font-weight="bold" fill="#108010" text-anchor="middle">a</text>
<rect x="312" y="204" width="15" height="1.2" fill="#0000ff"/>
<path d="M336,193.5 H341.5 V203.5 H348" fill="none" stroke="#0000ff" stroke-width="1.2"/>
<path d="M358,196.5 H372 M364.5,196.5 V206" fill="none" stroke="#0000ff" stroke-width="1.2"/><rect x="363" y="195" width="3" height="3" fill="#000"/>
<path d="M388.5,191 V200.5 M382,200.5 H395 M385,202.5 H392 M387,204.5 H390" fill="none" stroke="#000" stroke-width="1.1"/>
<path d="M406,193 L415,202 M415,193 L406,202" fill="none" stroke="#000" stroke-width="1.3"/>
<rect x="433.5" y="190.5" width="14" height="4" fill="#fff" stroke="#3a5a8a" stroke-width="1"/><path d="M437.5,194 V192.5 M440.5,194 V193 M443.5,194 V193 M445.5,194 V192.5" stroke="#000" stroke-width="1"/>
<rect x="461.5" y="190.5" width="4" height="14" fill="#fff" stroke="#3a5a8a" stroke-width="1"/><path d="M462,197.5 H463.5 M462,200.5 H463 M462,203 H463.5" stroke="#000" stroke-width="1"/>
<rect x="485" y="202" width="15" height="1" fill="#8a8a8a"/><text x="495.5" y="201" font-family="Liberation Sans" font-size="9.5" fill="#8a8a8a" text-anchor="middle">2</text>
<text x="522.5" y="204.5" font-family="Liberation Serif" font-size="16" font-weight="bold" fill="#1a4ad0" text-anchor="middle">&#937;</text>
<line x1="552" y1="199.5" x2="557" y2="204" stroke="#b08a10" stroke-width="2.4" stroke-linecap="round"/><circle cx="548.5" cy="195.5" r="4.6" fill="#d8f0ff" stroke="#3a5a80" stroke-width="1.3"/>
<path d="M567.5,192 L578.5,202.5 M578.5,192 L567.5,202.5" stroke="#a6a4a6" stroke-width="3.2"/>
<path d="M592.5,190.5 V203 L595.5,200 L598,205 L600,204 L597.5,199.5 L601.5,199 Z" fill="#fff" stroke="#2a3a5a" stroke-width="1"/>
<path d="M625,192 H630 V197 H626 L624,199 H627 L622,204 L619,201 L619,198 L621,196 Z" fill="#a6a4a6"/>
<path d="M642,192 H648 L651,195 V201 L648,204 L645,201 H648 L646,198 H642 Z" fill="#a6a4a6"/>
<path d="M664,197.5 L667,193 H670 V196 H671 V193 H674 L678,197.5 L674,202 H671 V199 H670 V202 H667 Z" fill="#a6a4a6"/>
<text x="703" y="203.5" font-family="Liberation Serif" font-size="15" font-weight="bold" fill="#2a5aa8" text-anchor="middle">A</text>
<path d="M723,193.5 L732,200 L722.5,202.5 Z" fill="none" stroke="#000" stroke-width="1"/><rect x="721" y="191.5" width="3.5" height="3.5" fill="#000"/><rect x="730.5" y="198.5" width="3.5" height="3.5" fill="#000"/><rect x="720.5" y="201" width="3.5" height="3.5" fill="#000"/>
<circle cx="750.5" cy="198" r="6.4" fill="none" stroke="#000" stroke-width="1.3"/>
<rect x="768.5" y="192.5" width="10" height="10" fill="none" stroke="#000" stroke-width="1.3"/>
<path d="M793,192.5 H801.5 V202.5 H791.5 V194 Z" fill="#fff" stroke="#a01010" stroke-width="1.2"/><path d="M793,194.5 H799.5 M793,196.5 H799.5 M793,198.5 H799.5 M793,200.5 H799.5" stroke="#707070" stroke-width="0.8"/>
<path d="M819.5,202.5 Q821,194.5 830,192.5" fill="none" stroke="#000" stroke-width="1.3"/>
<path d="M853.5,199 V192.5 M853.5,194 Q855,192.5 856.5,192.5 Q858,192.5 858,194.5 V199" fill="none" stroke="#000" stroke-width="1.2"/><rect x="850" y="201" width="13" height="2" fill="#ff0000"/><path d="M853,205 L862.5,196" stroke="#000" stroke-width="0.9"/>
<path d="M874,194 L884,204 M897,203.5 L907,193" stroke="#ff0000" stroke-width="1"/>
<path d="M920,193.5 H925.5 V202.5 H932.5" fill="none" stroke="#ff0000" stroke-width="3" stroke-linejoin="round" stroke-linecap="round"/>
<rect x="957" y="191" width="1" height="1" fill="#000"/><rect x="957" y="197" width="1" height="1" fill="#000"/><rect x="959" y="191" width="1" height="1" fill="#000"/><rect x="959" y="197" width="1" height="1" fill="#000"/><rect x="961" y="191" width="1" height="1" fill="#000"/><rect x="961" y="197" width="1" height="1" fill="#000"/><rect x="963" y="191" width="1" height="1" fill="#000"/><rect x="963" y="197" width="1" height="1" fill="#000"/><rect x="965" y="191" width="1" height="1" fill="#000"/><rect x="965" y="197" width="1" height="1" fill="#000"/><rect x="957" y="191" width="1" height="1" fill="#000"/><rect x="965" y="191" width="1" height="1" fill="#000"/><rect x="957" y="193" width="1" height="1" fill="#000"/><rect x="965" y="193" width="1" height="1" fill="#000"/><rect x="957" y="195" width="1" height="1" fill="#000"/><rect x="965" y="195" width="1" height="1" fill="#000"/><rect x="957" y="197" width="1" height="1" fill="#000"/><rect x="965" y="197" width="1" height="1" fill="#000"/>
<rect x="950" y="198" width="1" height="1" fill="#000"/><rect x="950" y="204" width="1" height="1" fill="#000"/><rect x="952" y="198" width="1" height="1" fill="#000"/><rect x="952" y="204" width="1" height="1" fill="#000"/><rect x="954" y="198" width="1" height="1" fill="#000"/><rect x="954" y="204" width="1" height="1" fill="#000"/><rect x="956" y="198" width="1" height="1" fill="#000"/><rect x="956" y="204" width="1" height="1" fill="#000"/><rect x="958" y="198" width="1" height="1" fill="#000"/><rect x="958" y="204" width="1" height="1" fill="#000"/><rect x="950" y="198" width="1" height="1" fill="#000"/><rect x="958" y="198" width="1" height="1" fill="#000"/><rect x="950" y="200" width="1" height="1" fill="#000"/><rect x="958" y="200" width="1" height="1" fill="#000"/><rect x="950" y="202" width="1" height="1" fill="#000"/><rect x="958" y="202" width="1" height="1" fill="#000"/><rect x="950" y="204" width="1" height="1" fill="#000"/><rect x="958" y="204" width="1" height="1" fill="#000"/>
<path d="M952,200 V196 L955,194 H957 L958,192" fill="none" stroke="#0000ff" stroke-width="1.2"/><path d="M954,201.5 H958 L961,199 L962,194" fill="none" stroke="#ff0000" stroke-width="1"/><path d="M960,195 L962,193 L964,195" fill="none" stroke="#ff0000" stroke-width="1"/>
<rect x="980" y="191" width="1" height="1" fill="#000"/><rect x="980" y="197" width="1" height="1" fill="#000"/><rect x="982" y="191" width="1" height="1" fill="#000"/><rect x="982" y="197" width="1" height="1" fill="#000"/><rect x="984" y="191" width="1" height="1" fill="#000"/><rect x="984" y="197" width="1" height="1" fill="#000"/><rect x="986" y="191" width="1" height="1" fill="#000"/><rect x="986" y="197" width="1" height="1" fill="#000"/><rect x="988" y="191" width="1" height="1" fill="#000"/><rect x="988" y="197" width="1" height="1" fill="#000"/><rect x="980" y="191" width="1" height="1" fill="#000"/><rect x="988" y="191" width="1" height="1" fill="#000"/><rect x="980" y="193" width="1" height="1" fill="#000"/><rect x="988" y="193" width="1" height="1" fill="#000"/><rect x="980" y="195" width="1" height="1" fill="#000"/><rect x="988" y="195" width="1" height="1" fill="#000"/><rect x="980" y="197" width="1" height="1" fill="#000"/><rect x="988" y="197" width="1" height="1" fill="#000"/>
<rect x="973" y="198" width="1" height="1" fill="#000"/><rect x="973" y="204" width="1" height="1" fill="#000"/><rect x="975" y="198" width="1" height="1" fill="#000"/><rect x="975" y="204" width="1" height="1" fill="#000"/><rect x="977" y="198" width="1" height="1" fill="#000"/><rect x="977" y="204" width="1" height="1" fill="#000"/><rect x="979" y="198" width="1" height="1" fill="#000"/><rect x="979" y="204" width="1" height="1" fill="#000"/><rect x="981" y="198" width="1" height="1" fill="#000"/><rect x="981" y="204" width="1" height="1" fill="#000"/><rect x="973" y="198" width="1" height="1" fill="#000"/><rect x="981" y="198" width="1" height="1" fill="#000"/><rect x="973" y="200" width="1" height="1" fill="#000"/><rect x="981" y="200" width="1" height="1" fill="#000"/><rect x="973" y="202" width="1" height="1" fill="#000"/><rect x="981" y="202" width="1" height="1" fill="#000"/><rect x="973" y="204" width="1" height="1" fill="#000"/><rect x="981" y="204" width="1" height="1" fill="#000"/>
<path d="M975,194 V201" stroke="#0000ff" stroke-width="1"/><path d="M977,201.5 H981 L984,199 L985,194" fill="none" stroke="#ff0000" stroke-width="1"/><path d="M983,195 L985,193 L987,195" fill="none" stroke="#ff0000" stroke-width="1"/>
<rect x="998" y="195" width="1" height="1" fill="#000"/><rect x="998" y="201" width="1" height="1" fill="#000"/><rect x="1000" y="195" width="1" height="1" fill="#000"/><rect x="1000" y="201" width="1" height="1" fill="#000"/><rect x="1002" y="195" width="1" height="1" fill="#000"/><rect x="1002" y="201" width="1" height="1" fill="#000"/><rect x="1004" y="195" width="1" height="1" fill="#000"/><rect x="1004" y="201" width="1" height="1" fill="#000"/><rect x="1006" y="195" width="1" height="1" fill="#000"/><rect x="1006" y="201" width="1" height="1" fill="#000"/><rect x="998" y="195" width="1" height="1" fill="#000"/><rect x="1006" y="195" width="1" height="1" fill="#000"/><rect x="998" y="197" width="1" height="1" fill="#000"/><rect x="1006" y="197" width="1" height="1" fill="#000"/><rect x="998" y="199" width="1" height="1" fill="#000"/><rect x="1006" y="199" width="1" height="1" fill="#000"/><rect x="998" y="201" width="1" height="1" fill="#000"/><rect x="1006" y="201" width="1" height="1" fill="#000"/>
<path d="M1004,195.5 H1011 M1007.5,192 V199" stroke="#ff0000" stroke-width="1.3"/>
<rect x="1020" y="195" width="1" height="1" fill="#000"/><rect x="1020" y="201" width="1" height="1" fill="#000"/><rect x="1022" y="195" width="1" height="1" fill="#000"/><rect x="1022" y="201" width="1" height="1" fill="#000"/><rect x="1024" y="195" width="1" height="1" fill="#000"/><rect x="1024" y="201" width="1" height="1" fill="#000"/><rect x="1026" y="195" width="1" height="1" fill="#000"/><rect x="1026" y="201" width="1" height="1" fill="#000"/><rect x="1028" y="195" width="1" height="1" fill="#000"/><rect x="1028" y="201" width="1" height="1" fill="#000"/><rect x="1020" y="195" width="1" height="1" fill="#000"/><rect x="1028" y="195" width="1" height="1" fill="#000"/><rect x="1020" y="197" width="1" height="1" fill="#000"/><rect x="1028" y="197" width="1" height="1" fill="#000"/><rect x="1020" y="199" width="1" height="1" fill="#000"/><rect x="1028" y="199" width="1" height="1" fill="#000"/><rect x="1020" y="201" width="1" height="1" fill="#000"/><rect x="1028" y="201" width="1" height="1" fill="#000"/>
<path d="M1025,196 Q1026,192 1029,192 Q1032.5,192.5 1032.5,196 Q1032,200 1029,200.5" fill="none" stroke="#ff0000" stroke-width="1.2"/><path d="M1023,196 L1028,196 L1025.5,199 Z" fill="#ff0000"/>
<defs><linearGradient id="pg" x1="0" y1="0" x2="1" y2="1"><stop offset="0" stop-color="#fff"/><stop offset="1" stop-color="#b8c8e0"/></linearGradient></defs>
</svg>
<!-- misc details -->
<div class="a" style="left:341px;top:654px;width:723px;height:1px;background:#fff"></div>
<div class="a" style="left:120px;top:656px;width:944px;height:1px;background:#dcdadc"></div>
<div class="a" style="left:751px;top:244px;width:1px;height:15px;background:#383838"></div>
<div class="a" style="left:751px;top:259px;width:1px;height:4px;background:#fff"></div>
<div class="a" style="left:1260px;top:337px;width:7px;height:1px;background:linear-gradient(90deg,#202020,#909090)"></div>
<div class="a" style="left:1260px;top:340px;width:7px;height:1px;background:linear-gradient(90deg,#202020,#909090)"></div>
<div class="a" style="left:1260px;top:343px;width:7px;height:1px;background:linear-gradient(90deg,#202020,#909090)"></div>

</body></html>
